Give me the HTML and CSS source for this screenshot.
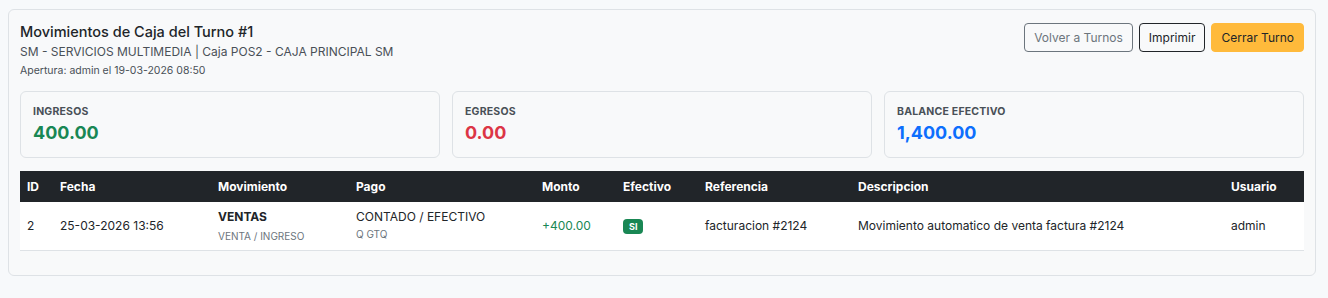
FILE: index.html
```html
<!DOCTYPE html>
<html lang="es">
<head>
<meta charset="utf-8">
<title>Movimientos de Caja</title>
<link rel="stylesheet" href="styles.css">
</head>
<body>
<div class="card">
  <div class="head">
    <div class="titles">
      <h1 class="title">Movimientos de Caja del Turno #1</h1>
      <div class="sub">SM - SERVICIOS MULTIMEDIA | Caja POS2 - CAJA PRINCIPAL SM</div>
      <div class="meta">Apertura: admin el 19-03-2026 08:50</div>
    </div>
    <div class="actions">
      <button class="btn btn-gray">Volver a Turnos</button>
      <button class="btn btn-dark">Imprimir</button>
      <button class="btn btn-warn">Cerrar Turno</button>
    </div>
  </div>
  <div class="stats">
    <div class="stat"><div class="label">INGRESOS</div><div class="value green">400.00</div></div>
    <div class="stat"><div class="label">EGRESOS</div><div class="value red">0.00</div></div>
    <div class="stat"><div class="label">BALANCE EFECTIVO</div><div class="value blue">1,400.00</div></div>
  </div>
  <table class="tbl">
    <colgroup>
      <col class="c-id"><col class="c-fecha"><col class="c-mov"><col class="c-pago"><col class="c-monto"><col class="c-efe"><col class="c-ref"><col class="c-desc"><col class="c-usr">
    </colgroup>
    <thead>
      <tr><th>ID</th><th>Fecha</th><th>Movimiento</th><th>Pago</th><th>Monto</th><th>Efectivo</th><th>Referencia</th><th>Descripcion</th><th>Usuario</th></tr>
    </thead>
    <tbody>
      <tr>
        <td>2</td>
        <td>25-03-2026 13:56</td>
        <td><div class="strong">VENTAS</div><div class="small">VENTA / INGRESO</div></td>
        <td><div>CONTADO / EFECTIVO</div><div class="small">Q GTQ</div></td>
        <td class="green">+400.00</td>
        <td><span class="badge">SI</span></td>
        <td>facturacion #2124</td>
        <td>Movimiento automatico de venta factura #2124</td>
        <td>admin</td>
      </tr>
    </tbody>
  </table>
</div>
</body>
</html>
```

FILE: styles.css
```css
* { box-sizing: border-box; }
html, body { margin: 0; }
body {
  background: #f7f9fb;
  font-family: Inter, "Noto Sans", "Liberation Sans", sans-serif;
  color: #212529;
  padding: 9px 12px 0 8px;
}
.card {
  background: #f8f9fa;
  border: 1px solid #dee2e6;
  border-radius: 6px;
  padding: 11px 11px 24px 11px;
}
.head {
  display: flex;
  justify-content: space-between;
  align-items: flex-start;
}
.title {
  margin: 0;
  font-size: 14.5px;
  font-weight: 500;
  line-height: 22px;
}
.sub {
  font-size: 12px;
  color: #495057;
  line-height: 18px;
}
.meta {
  font-size: 10.5px;
  color: #495057;
  line-height: 16px;
  margin-top: 2px;
}
.actions {
  display: flex;
  gap: 6px;
  margin-top: 2px;
}
.btn {
  font-family: inherit;
  font-size: 12px;
  height: 29px;
  padding: 0 9px;
  border-radius: 4px;
  background: transparent;
  border: 1px solid;
  line-height: 27px;
}
.btn-gray { color: #6c757d; border-color: #6c757d; }
.btn-dark { color: #212529; border-color: #212529; }
.btn-warn { background: #ffba3b; border-color: #ffba3b; color: #212529; }
.stats {
  display: grid;
  grid-template-columns: repeat(3, 1fr);
  gap: 12px;
  margin-top: 12px;
}
.stat {
  border: 1px solid #dee2e6;
  border-radius: 6px;
  height: 67px;
  padding: 13px 12px 0;
}
.label {
  font-size: 10.5px;
  font-weight: 700;
  color: #495057;
  letter-spacing: 0.2px;
  line-height: 14px;
}
.value {
  font-size: 18px;
  font-weight: 700;
  line-height: 24px;
  margin-top: 2px;
}
.green { color: #198754; }
.red { color: #dc3545; }
.blue { color: #0d6efd; }
.tbl {
  width: 100%;
  border-collapse: collapse;
  table-layout: fixed;
  margin-top: 13px;
  font-size: 12px;
}
.c-id { width: 33px; }
.c-fecha { width: 158px; }
.c-mov { width: 138px; }
.c-pago { width: 186px; }
.c-monto { width: 81px; }
.c-efe { width: 82px; }
.c-ref { width: 153px; }
.c-desc { width: 373px; }
.c-usr { width: 80px; }
.tbl th {
  background: #212529;
  color: #fff;
  font-weight: 700;
  text-align: left;
  height: 31px;
  padding: 0 7px;
}
.tbl td {
  background: #fff;
  height: 48px;
  padding: 0 7px;
  border-bottom: 1px solid #dee2e6;
  vertical-align: middle;
}
.tbl td.green { color: #198754; }
.strong { font-weight: 700; line-height: 18px; }
.small { font-size: 10px; color: #6c757d; line-height: 16px; margin-top: 2px; }
.badge {
  display: inline-block;
  background: #198754;
  color: #fff;
  font-size: 9px;
  font-weight: 700;
  border-radius: 4px;
  padding: 0 6px;
  line-height: 15px;
  vertical-align: middle;
}
```
